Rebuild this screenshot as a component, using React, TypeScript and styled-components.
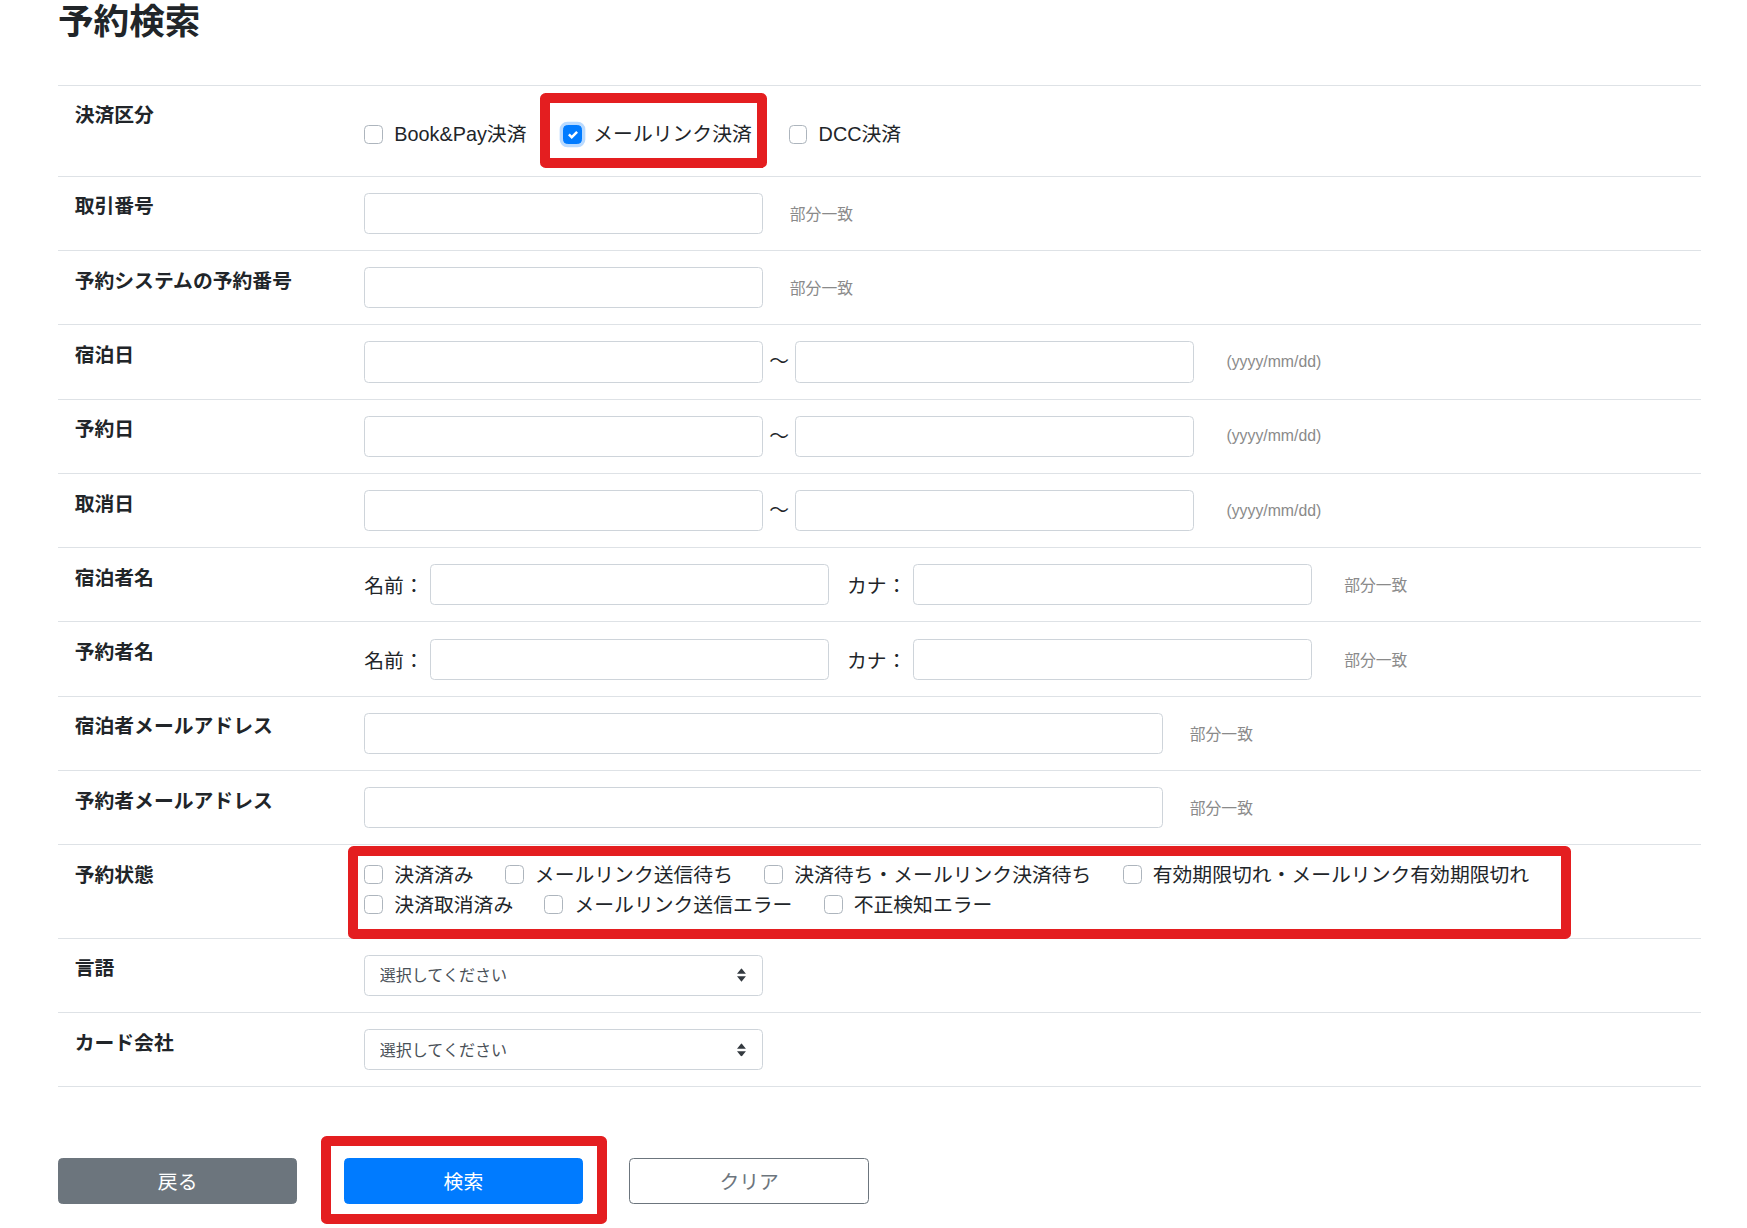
import React from "react";
import styled, { createGlobalStyle } from "styled-components";

const GlobalStyle = createGlobalStyle`
  body {
    margin: 0;
    background: #fff;
    color: #212529;
    font-family: "Liberation Sans", "Noto Sans CJK JP", sans-serif;
  }
`;

// the reference is a Bootstrap-like page shown at ~111% browser zoom
const Page = styled.div`
  zoom: 1.114;
  width: 1475px;
  padding: 0 0 19.5px 52px;
`;

const Title = styled.h2`
  margin: 0 0 36px;
  font-size: 32px;
  line-height: 40px;
  font-weight: 700;
`;

const Table = styled.div`
  border-bottom: 1px solid #dee2e6;
`;

const Row = styled.div`
  display: grid;
  grid-template-columns: 275px 1fr;
  border-top: 1px solid #dee2e6;
`;

const Label = styled.div`
  padding: 14px 15px;
  font-size: 17.8px;
  line-height: 1.5;
  font-weight: 700;
`;

const Field = styled.div<{ $pad?: string }>`
  position: relative;
  display: flex;
  align-items: center;
  padding: ${(p) => p.$pad ?? "14.4px 0"};
  font-size: 17.8px;
`;

const Input = styled.input<{ $w: number }>`
  box-sizing: border-box;
  width: ${(p) => p.$w}px;
  height: 37px;
  padding: 6px 12px;
  border: 1px solid #ced4da;
  border-radius: 4px;
  background: #fff;
  font: inherit;
  color: #495057;
`;

const Hint = styled.span<{ $ml: number }>`
  margin-left: ${(p) => p.$ml}px;
  color: #8a8a8a;
  font-size: 14.2px;
`;

const Tilde = styled.span`
  width: 29px;
  margin-bottom: 4px;
  text-align: center;
`;

const Prefix = styled.span<{ $ml?: number }>`
  margin-left: ${(p) => p.$ml ?? 0}px;
  margin-right: 6px;
`;

const CheckGroup = styled.div<{ $lh: number }>`
  display: flex;
  flex-wrap: wrap;
  flex: 1;
  line-height: ${(p) => p.$lh}px;
`;

const CheckItem = styled.label<{ $gap: number }>`
  position: relative;
  display: inline-flex;
  align-items: center;
  margin-right: ${(p) => p.$gap}px;
  white-space: nowrap;
`;

const Box = styled.span<{ $checked?: boolean }>`
  box-sizing: border-box;
  flex: none;
  display: inline-flex;
  align-items: center;
  justify-content: center;
  width: 17px;
  height: 17px;
  margin-right: 10px;
  border: 1px solid ${(p) => (p.$checked ? "#007bff" : "#adb5bd")};
  border-radius: 4px;
  background: ${(p) => (p.$checked ? "#007bff" : "#fff")};
  box-shadow: ${(p) => (p.$checked ? "0 0 0 3px #b9daff" : "none")};
`;

const Ring = styled.span<{ $t: number; $r: number; $b: number; $l: number }>`
  position: absolute;
  top: ${(p) => p.$t}px;
  right: ${(p) => p.$r}px;
  bottom: ${(p) => p.$b}px;
  left: ${(p) => p.$l}px;
  border: 9px solid #e41e20;
  border-radius: 5px;
  pointer-events: none;
`;

const SelectWrap = styled.div`
  position: relative;
  width: 358px;
`;

const Select = styled.select`
  box-sizing: border-box;
  width: 100%;
  height: 37px;
  padding: 0 30px 0 13px;
  border: 1px solid #ced4da;
  border-radius: 4px;
  background: #fff;
  appearance: none;
  font-family: inherit;
  font-size: 14.4px;
  color: #495057;
`;

const Caret = styled.svg`
  position: absolute;
  right: 15px;
  top: 50%;
  transform: translateY(-50%);
  pointer-events: none;
`;

const Actions = styled.div`
  display: flex;
  gap: 41.5px;
  margin-top: 63.5px;
`;

const Marked = styled.div`
  position: relative;
  display: flex;
`;

const variants = {
  gray: { bg: "#6c757d", border: "#6c757d", color: "#fff" },
  primary: { bg: "#007bff", border: "#007bff", color: "#fff" },
  outline: { bg: "#fff", border: "#6c757d", color: "#6c757d" },
};

const Button = styled.button<{ $variant: keyof typeof variants }>`
  width: 215px;
  height: 41px;
  border: 1px solid ${(p) => variants[p.$variant].border};
  border-radius: 4px;
  background: ${(p) => variants[p.$variant].bg};
  color: ${(p) => variants[p.$variant].color};
  font-family: inherit;
  font-size: 17.8px;
  cursor: pointer;
`;

const Check = () => (
  <svg width="9" height="9" viewBox="0 0 8 8">
    <path fill="#fff" d="M6.564.75l-3.59 3.612-1.538-1.55L0 4.26 2.974 7.25 8 2.193z" />
  </svg>
);

const SelectField = () => (
  <SelectWrap>
    <Select defaultValue="">
      <option value="">選択してください</option>
    </Select>
    <Caret width="8" height="12" viewBox="0 0 4 6">
      <path fill="#343a40" d="M2 0L0 2.4h4zm0 6L0 3.6h4z" />
    </Caret>
  </SelectWrap>
);

const paymentTypes = [
  { label: "Book&Pay決済", checked: false },
  { label: "メールリンク決済", checked: true },
  { label: "DCC決済", checked: false },
];

const statuses = [
  "決済済み",
  "メールリンク送信待ち",
  "決済待ち・メールリンク決済待ち",
  "有効期限切れ・メールリンク有効期限切れ",
  "決済取消済み",
  "メールリンク送信エラー",
  "不正検知エラー",
];

const App: React.FC = () => {
  const dateRow = (label: string) => (
    <Row>
      <Label>{label}</Label>
      <Field>
        <Input $w={358} />
        <Tilde>～</Tilde>
        <Input $w={358} />
        <Hint $ml={29}>(yyyy/mm/dd)</Hint>
      </Field>
    </Row>
  );

  const nameRow = (label: string) => (
    <Row>
      <Label>{label}</Label>
      <Field>
        <Prefix>名前：</Prefix>
        <Input $w={358} />
        <Prefix $ml={16}>カナ：</Prefix>
        <Input $w={358} />
        <Hint $ml={29}>部分一致</Hint>
      </Field>
    </Row>
  );

  const textRow = (label: string, width: number) => (
    <Row>
      <Label>{label}</Label>
      <Field>
        <Input $w={width} />
        <Hint $ml={24}>部分一致</Hint>
      </Field>
    </Row>
  );

  return (
    <>
      <GlobalStyle />
      <Page>
        <Title>予約検索</Title>
        <Table>
          <Row>
            <Label>決済区分</Label>
            <Field $pad="31px 0 24px">
              <CheckGroup $lh={26}>
                {paymentTypes.map((t) => (
                  <CheckItem key={t.label} $gap={33}>
                    <Box $checked={t.checked}>{t.checked && <Check />}</Box>
                    {t.label}
                    {t.checked && <Ring $t={-24.5} $r={-14} $b={-17} $l={-21} />}
                  </CheckItem>
                ))}
              </CheckGroup>
            </Field>
          </Row>
          {textRow("取引番号", 358)}
          {textRow("予約システムの予約番号", 358)}
          {dateRow("宿泊日")}
          {dateRow("予約日")}
          {dateRow("取消日")}
          {nameRow("宿泊者名")}
          {nameRow("予約者名")}
          {textRow("宿泊者メールアドレス", 717)}
          {textRow("予約者メールアドレス", 717)}
          <Row>
            <Label>予約状態</Label>
            <Field $pad="13px 0 16px">
              <CheckGroup $lh={27}>
                {statuses.map((s) => (
                  <CheckItem key={s} $gap={28}>
                    <Box />
                    {s}
                  </CheckItem>
                ))}
              </CheckGroup>
              <Ring $t={1} $r={117} $b={-1} $l={-15} />
            </Field>
          </Row>
          <Row>
            <Label>言語</Label>
            <Field>
              <SelectField />
            </Field>
          </Row>
          <Row>
            <Label>カード会社</Label>
            <Field>
              <SelectField />
            </Field>
          </Row>
        </Table>
        <Actions>
          <Button $variant="gray">戻る</Button>
          <Marked>
            <Button $variant="primary">検索</Button>
            <Ring $t={-20} $r={-21} $b={-18} $l={-20} />
          </Marked>
          <Button $variant="outline">クリア</Button>
        </Actions>
      </Page>
    </>
  );
};

export default App;
